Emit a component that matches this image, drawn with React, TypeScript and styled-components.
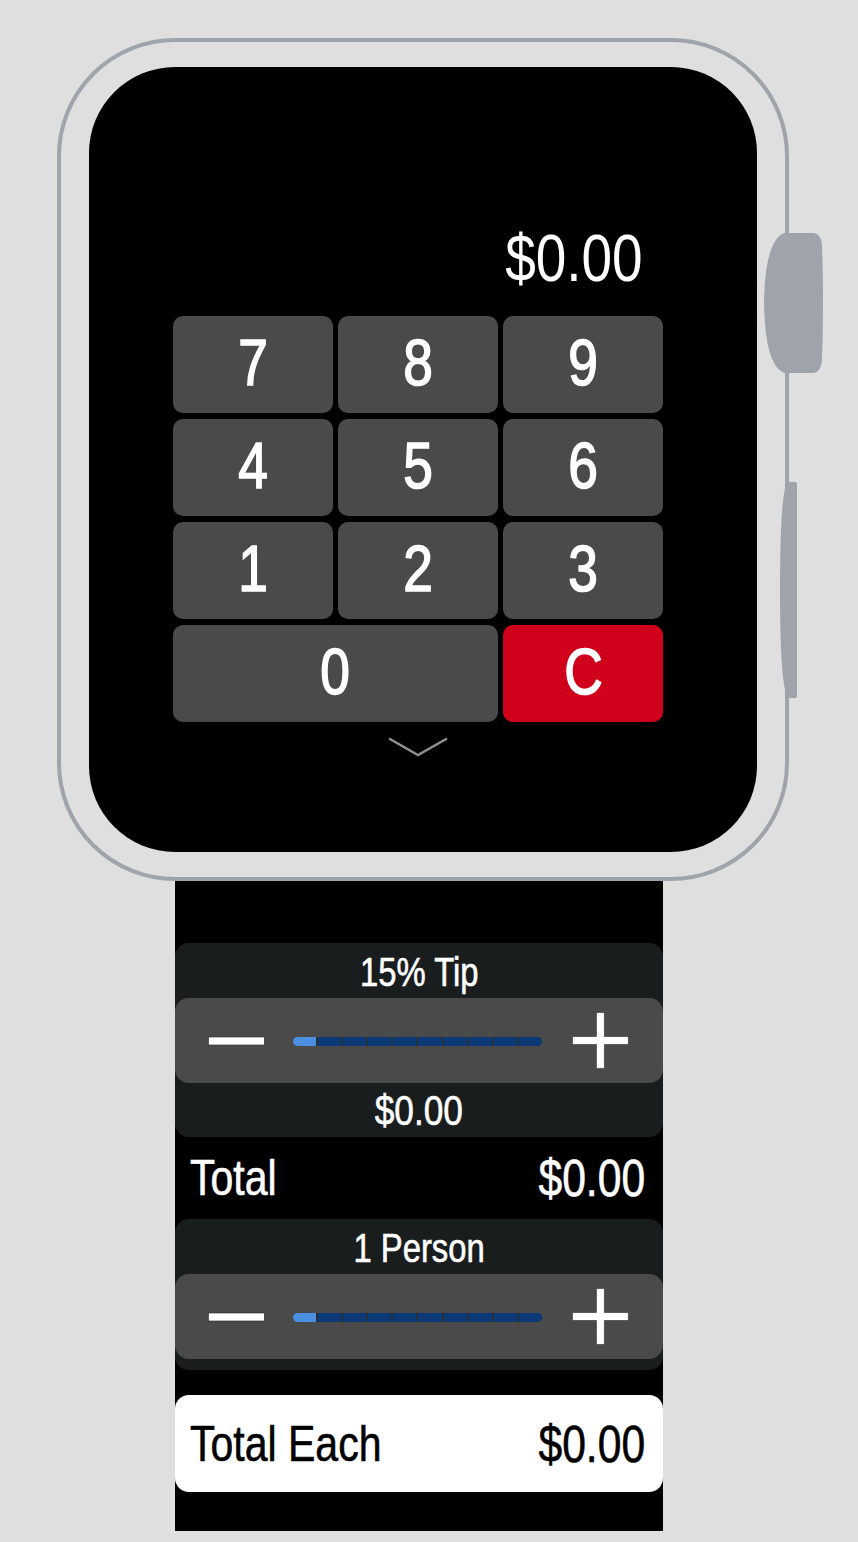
import React from "react";
import styled, { createGlobalStyle } from "styled-components";

const GlobalStyle = createGlobalStyle`
  html, body {
    margin: 0;
    padding: 0;
    background: #dfdfdf;
  }
  body {
    font-family: "Liberation Sans", Arial, Helvetica, sans-serif;
  }
  * { box-sizing: border-box; }
`;

const Page = styled.div`
  width: 858px;
  min-height: 1542px;
  padding-top: 38px;
  display: flex;
  flex-direction: column;
  background: #dfdfdf;
`;

const Case = styled.div`
  position: relative;
  margin-left: 57px;
  width: 732px;
  height: 843px;
  border: 4px solid #9ea3ac;
  border-radius: 118px;
  padding: 25px 28px 25px 28px;
`;

const Crown = styled.svg`
  position: absolute;
  left: 703px;
  top: 191px;
  width: 60px;
  height: 140px;
`;

const SideButton = styled.svg`
  position: absolute;
  left: 719px;
  top: 440px;
  width: 18px;
  height: 216px;
`;

const Screen = styled.div`
  width: 668px;
  height: 785px;
  background: #000;
  border-radius: 86px;
  padding: 157px 0 0 84px;
  display: flex;
  flex-direction: column;
`;

/* condensed rendering of the Helvetica-like face */
const Narrow = styled.span<{ $origin?: "left" | "center" | "right"; $stroke?: number }>`
  display: inline-block;
  transform: scaleX(0.82);
  transform-origin: ${(p) => p.$origin ?? "center"} center;
  white-space: nowrap;
  -webkit-text-stroke: ${(p) => p.$stroke ?? 0}px currentColor;
`;

const Display = styled.div`
  width: 490px;
  padding-right: 20px;
  text-align: right;
  color: #fff;
  font-size: 67px;
  line-height: 67px;
  font-weight: 400;
`;

const Keypad = styled.div`
  margin-top: 25px;
  width: 490px;
  display: grid;
  grid-template-columns: repeat(3, 1fr);
  grid-auto-rows: 97px;
  column-gap: 5px;
  row-gap: 6px;
`;

const Key = styled.div<{ $danger?: boolean; $span?: number }>`
  grid-column: span ${(p) => p.$span ?? 1};
  background: ${(p) => (p.$danger ? "#d0011b" : "#4a4a4a")};
  border-radius: 10px;
  color: #fff;
  font-size: 65px;
  line-height: 65px;
  display: flex;
  align-items: center;
  justify-content: center;
  padding-bottom: 4px;
`;

const ChevronRow = styled.div`
  width: 490px;
  margin-top: 15px;
  display: flex;
  justify-content: center;
`;

const Band = styled.div`
  margin-left: 175px;
  width: 488px;
  background: #000;
  padding: 62px 0 39px;
  display: flex;
  flex-direction: column;
`;

const StepperCard = styled.div`
  background: #1a1d1e;
  border-radius: 14px;
  display: flex;
  flex-direction: column;
`;

const CardLabel = styled.div`
  height: 55px;
  display: flex;
  align-items: center;
  justify-content: center;
  color: #fff;
  font-size: 40px;
  padding-top: 4px;
`;

const CardValue = styled.div`
  height: 54px;
  display: flex;
  align-items: center;
  justify-content: center;
  color: #fff;
  font-size: 43px;
`;

const CardFooter = styled.div`
  height: 11px;
`;

const StepperBar = styled.div`
  height: 85px;
  background: #4a4a4a;
  border-radius: 14px;
  display: flex;
  align-items: center;
  padding: 0 34px 0 33px;
`;

const Slider = styled.div`
  margin: 2px 30px 0 28px;
  width: 250px;
  height: 9px;
  border-radius: 5px;
  overflow: hidden;
  display: flex;
  gap: 2px;
  background: #26303b;
`;

const Segment = styled.div<{ $on?: boolean }>`
  flex: 1;
  background: ${(p) => (p.$on ? "#4a8fe0" : "#0c3a77")};
`;

const SummaryRow = styled.div<{ $light?: boolean }>`
  height: ${(p) => (p.$light ? "97px" : "82px")};
  margin-top: ${(p) => (p.$light ? "25px" : "0")};
  background: ${(p) => (p.$light ? "#fff" : "transparent")};
  border-radius: 14px;
  color: ${(p) => (p.$light ? "#000" : "#fff")};
  display: flex;
  align-items: center;
  justify-content: space-between;
  padding: 0 18px 0 15px;
  font-size: 50px;
`;

const Value = styled(Narrow)`
  font-size: 52px;
`;

const MinusIcon = () => (
  <svg width="57" height="10" viewBox="0 0 57 10">
    <rect x="0.5" y="1" width="56" height="8" fill="#fff" stroke="#2a2a2a" strokeWidth="0.6" />
  </svg>
);

const PlusIcon = () => (
  <svg width="57" height="57" viewBox="0 0 57 57">
    <path
      d="M24.5 0.5 H32.5 V24.5 H56.5 V32.5 H32.5 V56.5 H24.5 V32.5 H0.5 V24.5 H24.5 Z"
      fill="#fff"
      stroke="#2a2a2a"
      strokeWidth="0.6"
    />
  </svg>
);

const Stepper = () => (
  <StepperBar>
    <MinusIcon />
    <Slider>
      {Array.from({ length: 10 }).map((_, i) => (
        <Segment key={i} $on={i === 0} />
      ))}
    </Slider>
    <PlusIcon />
  </StepperBar>
);

export default function App() {
  const keys = ["7", "8", "9", "4", "5", "6", "1", "2", "3"];
  return (
    <>
      <GlobalStyle />
      <Page>
        <Case>
          <Screen>
            <Display>
              <Narrow $origin="right">$0.00</Narrow>
            </Display>
            <Keypad>
              {keys.map((k) => (
                <Key key={k}>
                  <Narrow $stroke={1.6}>{k}</Narrow>
                </Key>
              ))}
              <Key $span={2}>
                <Narrow $stroke={1.6}>0</Narrow>
              </Key>
              <Key $danger>
                <Narrow $stroke={1.6}>C</Narrow>
              </Key>
            </Keypad>
            <ChevronRow>
              <svg width="60" height="20" viewBox="0 0 60 20">
                <polyline points="1,1.5 30,18 59,1.5" fill="none" stroke="#8f8f8f" strokeWidth="2.5" />
              </svg>
            </ChevronRow>
          </Screen>
          <Crown viewBox="0 0 60 140">
            <path
              d="M20 0 H48 Q57 0 58 12 Q60 70 58 127 Q57 140 48 140 H20 Q1 132 0 70 Q1 8 20 0 Z"
              fill="#9ea3ac"
            />
          </Crown>
          <SideButton viewBox="0 0 18 216">
            <path d="M7 0 H15 Q17 0 17 3 V213 Q17 216 15 216 H8 Q0 205 0 108 Q0 14 7 0 Z" fill="#9ea3ac" />
          </SideButton>
        </Case>
        <Band>
          <StepperCard>
            <CardLabel>
              <Narrow $stroke={0.6}>15% Tip</Narrow>
            </CardLabel>
            <Stepper />
            <CardValue>
              <Narrow $stroke={0.6}>$0.00</Narrow>
            </CardValue>
          </StepperCard>
          <SummaryRow>
            <Narrow $origin="left" $stroke={0.6}>Total</Narrow>
            <Value $origin="right" $stroke={0.6}>$0.00</Value>
          </SummaryRow>
          <StepperCard>
            <CardLabel>
              <Narrow $stroke={0.6}>1 Person</Narrow>
            </CardLabel>
            <Stepper />
            <CardFooter />
          </StepperCard>
          <SummaryRow $light>
            <Narrow $origin="left" $stroke={0.6}>Total Each</Narrow>
            <Value $origin="right" $stroke={0.6}>$0.00</Value>
          </SummaryRow>
        </Band>
      </Page>
    </>
  );
}
